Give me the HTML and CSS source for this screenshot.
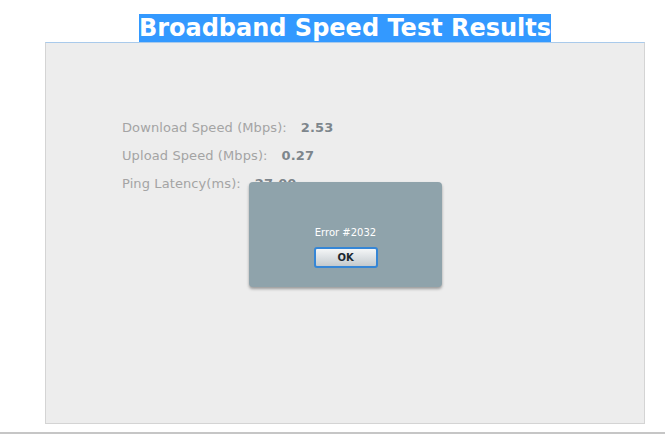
FILE: index.html
```html
<!DOCTYPE html>
<html>
<head>
<meta charset="utf-8">
<title>Broadband Speed Test Results</title>
<link rel="stylesheet" href="styles.css">
</head>
<body>
<div class="page">
  <h1 class="title"><span class="title-text">Broadband Speed Test Results</span></h1>
  <div class="panel">
    <div class="results">
      <div class="row"><span class="label">Download Speed (Mbps):</span><span class="value">2.53</span></div>
      <div class="row"><span class="label">Upload Speed (Mbps):</span><span class="value">0.27</span></div>
      <div class="row"><span class="label">Ping Latency(ms):</span><span class="value">27.00</span></div>
    </div>
    <div class="dialog">
      <div class="message">Error #2032</div>
      <button class="ok">OK</button>
    </div>
  </div>
</div>
<div class="rule"></div>
</body>
</html>
```
FILE: styles.css
```css
html, body {
  margin: 0;
  padding: 0;
  background: #ffffff;
}

body {
  font-family: "DejaVu Sans", Verdana, sans-serif;
}

.page {
  margin-left: 45px;
  width: 600px;
}

.title {
  margin: 15px 0 1px;
  font-size: 24px;
  line-height: 26px;
  font-weight: bold;
  text-align: center;
}

.title-text {
  background: #3399ff;
  color: #ffffff;
}

.panel {
  position: relative;
  height: 380px;
  background: #ededed;
  border: 1px solid #d4d4d4;
  border-top-color: #a9caeb;
}

.results {
  padding: 71px 0 0 76px;
}

.row {
  font-size: 13px;
  line-height: 28px;
  letter-spacing: 0.1px;
  color: #a4a4a4;
  white-space: nowrap;
}

.value {
  margin-left: 14px;
  font-weight: bold;
  color: #7d868c;
}

.dialog {
  position: absolute;
  left: 203px;
  top: 139px;
  width: 193px;
  height: 105px;
  box-sizing: border-box;
  background: #8fa3ab;
  border-radius: 4px;
  box-shadow: 0 2px 3px rgba(0, 0, 0, 0.35);
  display: flex;
  flex-direction: column;
  align-items: center;
  padding-top: 44px;
}

.message {
  font-size: 10px;
  line-height: 13px;
  color: #ffffff;
}

.ok {
  margin-top: 8px;
  width: 64px;
  height: 21px;
  box-sizing: border-box;
  border: 2px solid #3586d6;
  border-radius: 3px;
  background: linear-gradient(#f4f6f7, #d9dee1 55%, #c4cacd);
  font-family: "DejaVu Sans", Verdana, sans-serif;
  font-size: 10px;
  font-weight: bold;
  color: #1c2830;
  padding: 0;
}

.rule {
  margin-top: 8px;
  height: 2px;
  background: #c6c6c6;
}
```
